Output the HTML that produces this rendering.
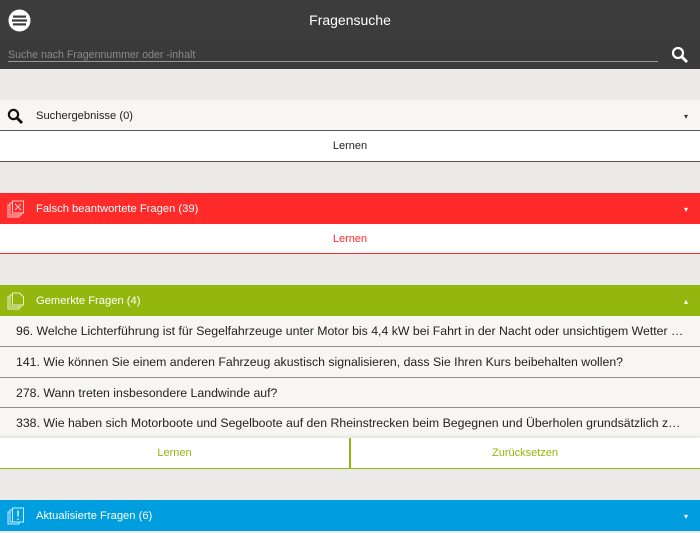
<!DOCTYPE html>
<html><head><meta charset="utf-8"><style>
*{margin:0;padding:0;box-sizing:border-box}
body{width:700px;height:525px;overflow:hidden;background:#ebeae8;font-family:"Liberation Sans",sans-serif;position:relative}
.abs{position:absolute;left:0;width:700px}
.hdr{top:0;height:40px;background:#3c3c3c;color:#fff;text-align:center;font-size:14px;line-height:41px}
.srch{top:40px;height:29px;background:#3a3a3a}
.ph{position:absolute;left:8px;top:9px;font-size:10.6px;color:#8a8a8a}
.ul{position:absolute;left:8px;top:21px;width:650px;height:1px;background:#9a9a9a}
.sec{height:31px;font-size:11.2px;line-height:33px;padding-left:36px}
.row{height:30px;line-height:31px;text-align:center;font-size:11px;background:#fff}
.q{position:absolute;left:0;width:700px;height:30px;background:#f7f6f3;font-size:12.3px;line-height:31px;padding-left:16px;color:#222;white-space:nowrap;overflow:hidden;text-overflow:ellipsis;padding-right:16px}
.ln{position:absolute;left:0;width:700px;height:1px;background:#8e8e8e}
.ic{position:absolute;left:7px;top:7px}
.car{position:absolute;right:12px;top:0;font-size:8px}
</style></head><body>
<div class="abs hdr">Fragensuche
<svg style="position:absolute;left:8px;top:9px" width="23" height="23" viewBox="0 0 23 23"><circle cx="11.5" cy="11.5" r="11" fill="#fff"/><rect x="5" y="6.5" width="13" height="2.2" fill="#3c3c3c"/><rect x="4" y="10.4" width="15" height="2.2" fill="#3c3c3c"/><rect x="5" y="14.3" width="13" height="2.2" fill="#3c3c3c"/></svg></div>
<div class="abs srch"><div class="ph">Suche nach Fragennummer oder -inhalt</div><div class="ul"></div>
<svg style="position:absolute;left:671px;top:6px" width="18" height="18" viewBox="0 0 18 18"><circle cx="7" cy="7" r="5" stroke="#fff" stroke-width="2.2" fill="none"/><path d="M10.5 10.5L16 16" stroke="#fff" stroke-width="2.8"/></svg></div>

<div class="abs sec" style="top:100px;background:#f7f6f3;color:#222;border-bottom:1.5px solid #555">Suchergebnisse (0)
<svg class="ic" width="17" height="17" viewBox="0 0 17 17" style="top:8px"><circle cx="6.5" cy="6.5" r="4.6" stroke="#111" stroke-width="2.2" fill="none"/><path d="M10 10L15 15" stroke="#111" stroke-width="2.8"/></svg><span class="car" style="color:#333">&#9662;</span></div>
<div class="abs row" style="top:131px;border-bottom:1.5px solid #555;height:31px;color:#222">Lernen</div>

<div class="abs sec" style="top:193px;background:#ff2a2a;color:#fff">Falsch beantwortete Fragen (39)
<svg class="ic" width="18" height="18" viewBox="0 0 18 18" fill="none" stroke="#fcc" stroke-width="1"><rect x="1" y="5" width="11" height="12"/><rect x="3" y="3" width="11" height="12" fill="#ff2a2a"/><rect x="5.5" y="1" width="11" height="12" fill="#ff2a2a"/><path d="M8 4l6 6M14 4l-6 6"/></svg><span class="car">&#9662;</span></div>
<div class="abs row" style="top:224px;border-bottom:1.5px solid #ff2a2a;color:#ff2a2a">Lernen</div>

<div class="abs sec" style="top:285px;background:#93b70f;color:#fff">Gemerkte Fragen (4)
<svg class="ic" width="18" height="18" viewBox="0 0 18 18" fill="none" stroke="#e8f2c8" stroke-width="1"><rect x="1" y="5" width="11" height="12"/><rect x="3" y="3" width="11" height="12" fill="#93b70f"/><path d="M5.5 1h7l4 4v8h-11z" fill="#93b70f"/></svg><span class="car">&#9652;</span></div>
<div class="q" style="top:316px">96. Welche Lichterführung ist für Segelfahrzeuge unter Motor bis 4,4 kW bei Fahrt in der Nacht oder unsichtigem Wetter vorgeschrieben?</div>
<div class="ln" style="top:346px"></div>
<div class="q" style="top:347px">141. Wie können Sie einem anderen Fahrzeug akustisch signalisieren, dass Sie Ihren Kurs beibehalten wollen?</div>
<div class="ln" style="top:377px"></div>
<div class="q" style="top:378px">278. Wann treten insbesondere Landwinde auf?</div>
<div class="ln" style="top:407px"></div>
<div class="q" style="top:408px">338. Wie haben sich Motorboote und Segelboote auf den Rheinstrecken beim Begegnen und Überholen grundsätzlich zu verhalten?</div>
<div class="abs row" style="top:438px;height:31px;border-bottom:1.5px solid #93b70f;color:#93b70f;box-shadow:0 -2px 3px rgba(0,0,0,.08)">
<div style="position:absolute;left:0;width:349px">Lernen</div><div style="position:absolute;left:349px;top:0;width:1.5px;height:30px;background:#93b70f"></div><div style="position:absolute;left:350px;width:350px">Zurücksetzen</div></div>

<div class="abs sec" style="top:500px;background:#009ddf;color:#fff">Aktualisierte Fragen (6)
<svg class="ic" width="18" height="18" viewBox="0 0 18 18" fill="none" stroke="#cdeefc" stroke-width="1"><rect x="1" y="5" width="11" height="12"/><rect x="3" y="3" width="11" height="12" fill="#009ddf"/><rect x="5.5" y="1" width="11" height="14" fill="#009ddf"/><path d="M11 3.5v6M11 11.5v1.5" stroke-width="1.5"/></svg><span class="car">&#9662;</span></div>
</body></html>
